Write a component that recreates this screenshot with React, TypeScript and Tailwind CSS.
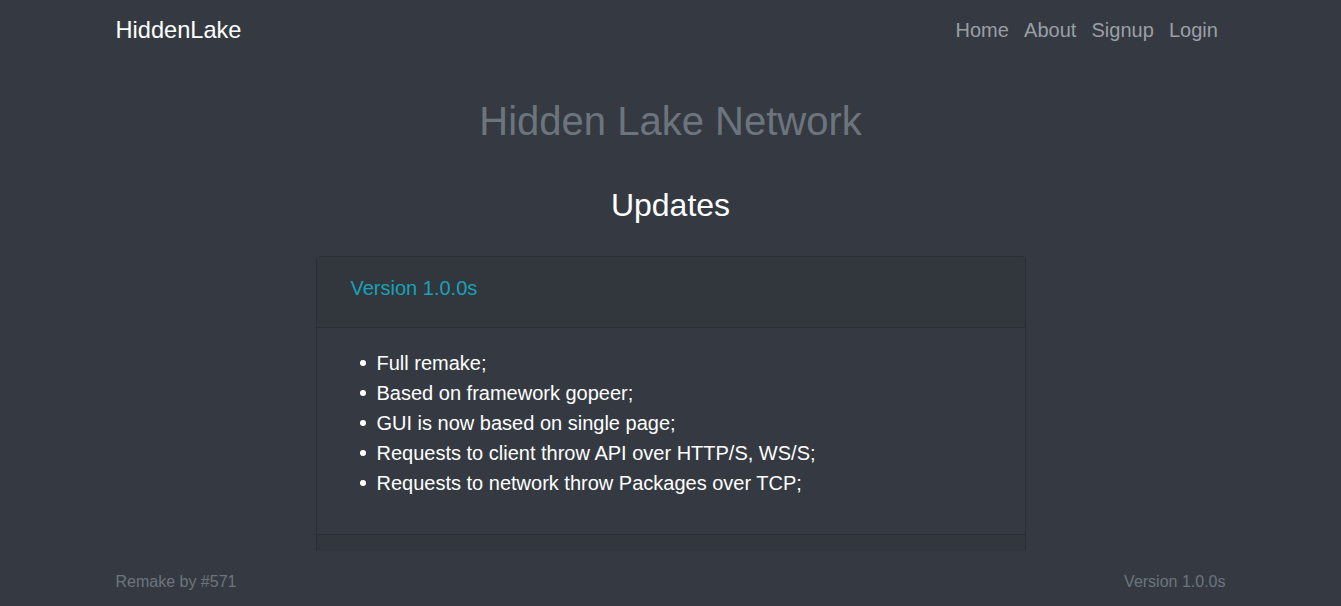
const updates = [
  {
    version: "Version 1.0.0s",
    items: [
      "Full remake;",
      "Based on framework gopeer;",
      "GUI is now based on single page;",
      "Requests to client throw API over HTTP/S, WS/S;",
      "Requests to network throw Packages over TCP;",
    ],
  },
]

const links = ["Home", "About", "Signup", "Login"]

export default function App() {
  return (
    <div
      className="flex h-screen flex-col bg-[#353a42] text-white"
      style={{ fontFamily: "'Liberation Sans', Arial, sans-serif" }}
    >
      {/* Navbar */}
      <header className="mx-auto flex h-[60px] w-[1110px] shrink-0 items-center justify-between">
        <a className="pt-[1px] text-[23.6px] leading-none text-white">HiddenLake</a>
        <nav className="flex">
          {links.map((l) => (
            <a key={l} className="px-[7.6px] text-[20px] leading-none text-[#9a9fa5]">
              {l}
            </a>
          ))}
        </nav>
      </header>

      {/* Main */}
      <main className="flex min-h-0 flex-1 flex-col items-center overflow-hidden">
        <h1 className="mt-[37px] text-[40px] leading-[48px] text-[#6c757d]">Hidden Lake Network</h1>
        <h2 className="mt-[41px] text-[32px] leading-[38px] text-white">Updates</h2>

        <div className="mt-[32px] w-[710px]">
          {updates.map((u) => (
            <div key={u.version} className="rounded-t border border-[#2b2f35]">
              <div className="border-b border-[#2b2f35] bg-[#32363d] pl-[34px] pr-8 py-4">
                <h5 className="mb-2 text-[20px] leading-[30px] text-[#17a2b8]">{u.version}</h5>
              </div>
              <div className="px-5 pt-5 pb-5">
                <ul className="mb-4 pl-[23px] text-[20px] leading-[30px]">
                  {u.items.map((i) => (
                    <li key={i} className="flex items-center gap-[11px]">
                      <span className="h-[6px] w-[6px] shrink-0 rounded-full bg-white" />
                      {i}
                    </li>
                  ))}
                </ul>
              </div>
              <div className="h-[40px] border-t border-[#2b2f35] bg-[#32363d]" />
            </div>
          ))}
        </div>
      </main>

      {/* Footer */}
      <footer className="mx-auto flex h-[55px] w-[1110px] shrink-0 items-center justify-between pt-[6px] text-[16px] text-[#6c757d]">
        <span>Remake by #571</span>
        <span>Version 1.0.0s</span>
      </footer>
    </div>
  )
}
